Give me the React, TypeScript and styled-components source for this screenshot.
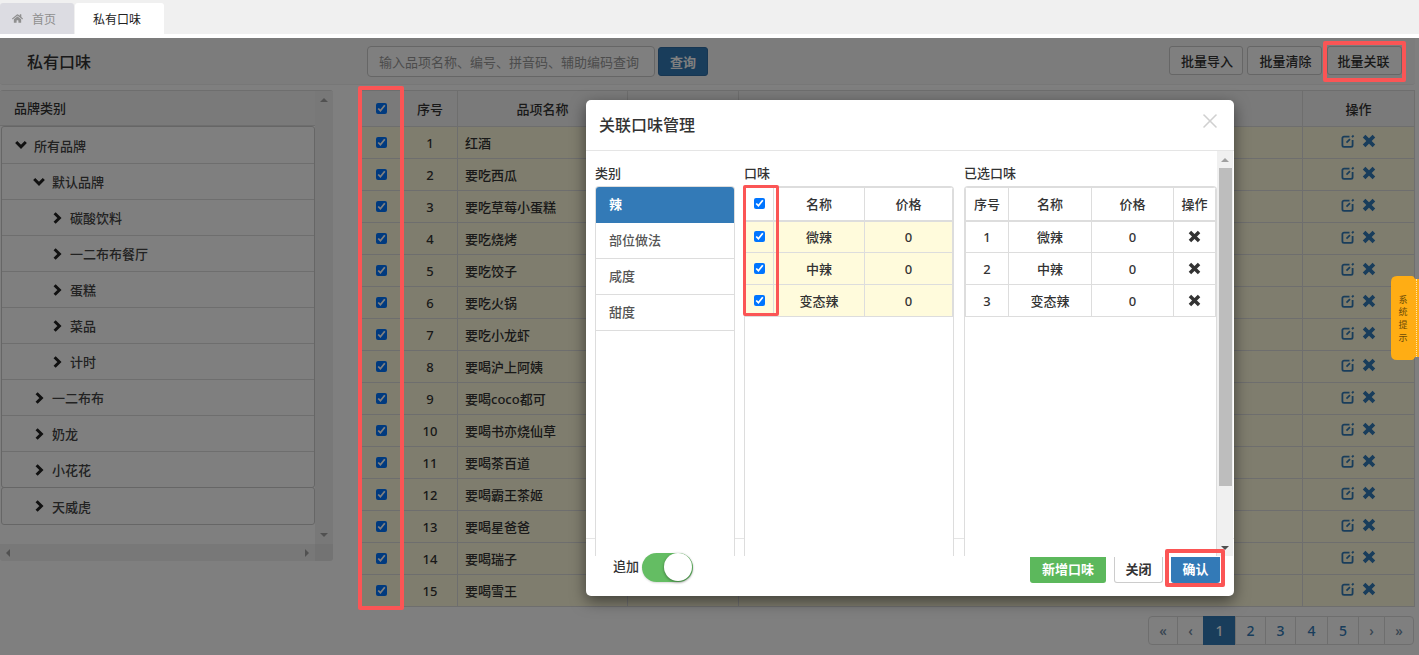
import styled, { createGlobalStyle } from "styled-components";
import { FaHome } from "react-icons/fa";
import { X } from "lucide-react";

const GlobalStyle = createGlobalStyle`
  html, body { margin: 0; padding: 0; background: #fff; }
  * { box-sizing: border-box; }
  body {
    font-family: "Noto Sans", "Noto Sans CJK SC", sans-serif;
    font-size: 13px;
    color: #333;
  }
`;

const Page = styled.div`
  position: relative;
  width: 1419px;
  height: 655px;
  overflow: hidden;
  background: #fff;
`;

const TabBar = styled.div`
  display: flex;
  gap: 1px;
  height: 34px;
  margin-bottom: 4px;
  padding-top: 3px;
  background: #f0f0f0;
  font-size: 12px;
`;

const Tab = styled.div<{ $active?: boolean }>`
  display: flex;
  align-items: center;
  gap: 9px;
  width: ${p => (p.$active ? 89 : 74)}px;
  padding-left: ${p => (p.$active ? 18 : 12)}px;
  border-radius: 3px 3px 0 0;
  background: ${p => (p.$active ? "#fff" : "#dcdce2")};
  color: ${p => (p.$active ? "#222" : "#8f8f8f")};
`;

const Header = styled.div`
  display: flex;
  align-items: flex-start;
  width: 1415px;
  height: 47px;
  padding-top: 8px;
  border-bottom: 1px solid #eee;
  background: #f9f9f9;
  border-radius: 0 0 3px 3px;
`;

const Title = styled.div`
  width: 367px;
  padding: 4px 0 0 27px;
  font-size: 16px;
  font-weight: 500;
  line-height: 24px;
`;

const SearchInput = styled.input`
  width: 288px;
  height: 31px;
  padding: 0 11px;
  border: 1px solid #ccc;
  border-radius: 4px;
  background: #fff;
  font: inherit;
  &::placeholder { color: #999; opacity: 1; }
`;

const SearchButton = styled.button`
  width: 50px;
  height: 29px;
  margin: 1px 0 0 3px;
  padding: 0;
  border: 1px solid #2e6da4;
  border-radius: 3px;
  background: #337ab7;
  color: #fff;
  font: inherit;
  font-weight: 700;
`;

const Actions = styled.div`
  display: flex;
  gap: 4px;
  margin-left: auto;
  padding-right: 13px;
`;

const ActionButton = styled.button`
  width: 75px;
  height: 29px;
  padding: 0 0 0 2px;
  border: 1px solid #ccc;
  border-radius: 3px;
  background: #fff;
  color: #333;
  font: inherit;
  font-weight: 500;
  &:first-child { width: 74px; }
  &:last-child { margin-left: 1px; padding: 0 2px 0 0; }
`;

const Main = styled.div`
  display: flex;
  align-items: flex-start;
  gap: 27px;
  padding-top: 5px;
`;

const BrandPanel = styled.div`
  display: grid;
  grid-template-columns: 315px 18px;
  grid-template-rows: 453px 18px;
  width: 333px;
  height: 471px;
  border-radius: 3px;
  background: #fff;
  border-top: 1px solid #ddd;
  overflow: hidden;
`;

const PanelHead = styled.div`
  height: 35px;
  padding-left: 14px;
  border-bottom: 1px solid #ddd;
  background: #f5f5f5;
  font-weight: 500;
  line-height: 35px;
`;

const TreeGroup = styled.div`
  margin-left: 1px;
  width: 314px;
  border: 1px solid #ccc;
  border-radius: 3px;
  background: #fff;
  & + & { margin-top: -1px; }
`;

const TreeRow = styled.div<{ $indent: number }>`
  display: flex;
  align-items: center;
  gap: 7px;
  height: 36px;
  padding-left: ${p => p.$indent}px;
  border-top: 1px solid #ddd;
  color: #444;
  font-weight: 500;
  &:first-child { border-top: none; }
`;

const ChevronSvg = styled.svg`
  flex: none;
  width: 12px;
  height: 12px;
  fill: none;
  stroke: #222;
  stroke-width: 3;
`;

const ScrollTrack = styled.div<{ $horizontal?: boolean }>`
  display: flex;
  flex-direction: ${p => (p.$horizontal ? "row" : "column")};
  align-items: center;
  justify-content: space-between;
  padding: ${p => (p.$horizontal ? "0 6px" : "7px 0")};
  background: #f0f0f0;
`;

const ScrollCorner = styled.div`
  background: #e6e6e6;
`;

const Arrow = styled.i<{ $dir: "up" | "down" | "left" | "right"; $tone?: string }>`
  display: block;
  width: 0;
  height: 0;
  border: 4px solid transparent;
  ${p => (p.$dir === "up" ? `border-top: none; border-bottom: 4px solid ${p.$tone ?? "#a3a3a3"};` : "")}
  ${p => (p.$dir === "down" ? `border-bottom: none; border-top: 4px solid ${p.$tone ?? "#a3a3a3"};` : "")}
  ${p => (p.$dir === "left" ? `border-left: none; border-right: 4px solid ${p.$tone ?? "#a3a3a3"};` : "")}
  ${p => (p.$dir === "right" ? `border-right: none; border-left: 4px solid ${p.$tone ?? "#a3a3a3"};` : "")}
`;

const TableColumn = styled.div`
  width: 1055px;
`;

const GridTable = styled.table`
  width: 100%;
  border-collapse: collapse;
  table-layout: fixed;
`;

const MainTable = styled(GridTable)`
  border: 1px solid #ddd;
`;

const HeadCell = styled.th<{ $w?: number; $h?: number; $thick?: boolean }>`
  width: ${p => (p.$w ? `${p.$w}px` : "auto")};
  height: ${p => p.$h ?? 36}px;
  padding: 0;
  border: 1px solid #ddd;
  border-bottom-width: ${p => (p.$thick ? 2 : 1)}px;
  background: ${p => (p.$thick ? "#fff" : "#f5f5f5")};
  font-weight: 500;
  text-align: center;
`;

const Row = styled.tr<{ $tinted?: boolean }>`
  height: 32px;
  background: ${p => (p.$tinted ? "#fffbdc" : "#fff")};
`;

const Cell = styled.td<{ $left?: boolean }>`
  padding: 0 0 0 ${p => (p.$left ? 7 : 0)}px;
  border: 1px solid #ddd;
  text-align: ${p => (p.$left ? "left" : "center")};
  font-weight: 500;
  white-space: nowrap;
`;

const Check = styled.input.attrs({ type: "checkbox", defaultChecked: true })`
  display: block;
  width: 11px;
  height: 11px;
  margin: 0 auto;
`;

const RowActions = styled.div`
  display: flex;
  align-items: center;
  justify-content: center;
  gap: 7px;
  padding-bottom: 3px;
  color: #337ab7;
`;

const EditSvg = styled.svg`
  display: block;
  width: 14px;
  height: 14px;
  fill: none;
  stroke: currentColor;
  stroke-width: 1.8;
`;

const CrossSvg = styled.svg<{ $size: number }>`
  display: block;
  width: ${p => p.$size}px;
  height: ${p => p.$size}px;
  fill: none;
  stroke: currentColor;
  stroke-width: 3.2;
`;

const RemoveCell = styled.span`
  display: flex;
  justify-content: center;
  color: #333;
`;

const Pager = styled.div`
  display: flex;
  justify-content: flex-end;
  margin: 9px 1px 0 0;
`;

const PageCell = styled.div<{ $w: number; $active?: boolean; $muted?: boolean }>`
  display: flex;
  align-items: center;
  justify-content: center;
  width: ${p => p.$w}px;
  height: 29px;
  margin-left: -1px;
  border: 1px solid ${p => (p.$active ? "#337ab7" : "#ddd")};
  background: ${p => (p.$active ? "#337ab7" : "#fff")};
  color: ${p => (p.$active ? "#fff" : p.$muted ? "#6f8aa3" : "#337ab7")};
  font-size: 14px;
  font-weight: 500;
  &:first-child { border-radius: 4px 0 0 4px; }
  &:last-child { border-radius: 0 4px 4px 0; }
`;

const Backdrop = styled.div`
  position: absolute;
  inset: 38px 0 0 0;
  background: rgba(0, 0, 0, 0.5);
`;

const Modal = styled.div`
  position: absolute;
  z-index: 1;
  left: 586px;
  top: 100px;
  width: 648px;
  height: 496px;
  border-radius: 5px;
  background: #fff;
  box-shadow: 0 5px 15px rgba(0, 0, 0, 0.5);
`;

const ModalHead = styled.div`
  display: flex;
  align-items: center;
  justify-content: space-between;
  height: 51px;
  padding: 0 12px 2px 13px;
  border-bottom: 1px solid #e5e5e5;
  font-size: 16px;
  font-weight: 500;
  svg { color: #d0d0d0; margin-bottom: 6px; }
`;

const ModalBody = styled.div`
  position: relative;
  z-index: 1;
  display: flex;
  height: 405px;
  margin-bottom: -18px;
  padding-left: 9px;
`;

const Column = styled.div<{ $w: number; $gap?: number }>`
  display: flex;
  flex-direction: column;
  width: ${p => p.$w}px;
  margin-right: ${p => p.$gap ?? 0}px;
  background: #fff;
`;

const ColumnLabel = styled.div`
  height: 35px;
  padding-top: 11px;
  font-weight: 500;
  line-height: 22px;
`;

const ColumnBox = styled.div`
  flex: 1;
  border: 1px solid #ddd;
  border-bottom: none;
  border-radius: 4px 4px 0 0;
  overflow: hidden;
`;

const CategoryItem = styled.div<{ $active?: boolean }>`
  height: 36px;
  padding-left: 13px;
  border-bottom: 1px solid ${p => (p.$active ? "#337ab7" : "#ddd")};
  background: ${p => (p.$active ? "#337ab7" : "#fff")};
  color: ${p => (p.$active ? "#fff" : "#555")};
  font-weight: ${p => (p.$active ? 700 : 500)};
  line-height: 35px;
`;

const ModalScroll = styled.div`
  display: flex;
  flex-direction: column;
  align-items: center;
  width: 16px;
  height: 405px;
  background: #f0f0f0;
`;

const ThumbCap = styled.div<{ $h: number }>`
  display: flex;
  align-items: center;
  justify-content: center;
  height: ${p => p.$h}px;
`;

const Thumb = styled.div`
  flex: none;
  width: 13px;
  height: 318px;
  background: #bdbdbd;
`;

const ThumbGap = styled.div`
  flex: 1;
`;

const ModalFoot = styled.div`
  display: flex;
  align-items: flex-start;
  height: 58px;
  padding: 14px 14px 0 27px;
  border-top: 1px solid #e5e5e5;
`;

const ToggleLabel = styled.span`
  position: relative;
  z-index: 2;
  margin-right: 3px;
  line-height: 26px;
  font-weight: 500;
`;

const Toggle = styled.div`
  position: relative;
  z-index: 2;
  display: flex;
  justify-content: flex-end;
  width: 51px;
  height: 29px;
  border-radius: 15px;
  background: #64bd63;
  box-shadow: 0 1px 2px rgba(0, 0, 0, 0.15);
`;

const Knob = styled.div`
  width: 28px;
  height: 28px;
  margin: 0 1px 0 0;
  border-radius: 50%;
  background: #fff;
  box-shadow: 0 1px 3px rgba(0, 0, 0, 0.4);
`;

const FootButtons = styled.div`
  position: relative;
  z-index: 2;
  display: flex;
  gap: 8px;
  margin: 4px 0 0 auto;
`;

const FootButton = styled.button<{ $kind: "success" | "default" | "primary"; $w: number }>`
  width: ${p => p.$w}px;
  height: 26px;
  padding: 0 0 2px;
  border: 1px solid ${p => ({ success: "#5cb85c", default: "#ccc", primary: "#337ab7" })[p.$kind]};
  border-top: none;
  border-radius: 0 0 3px 3px;
  background: ${p => ({ success: "#5cb85c", default: "#fff", primary: "#337ab7" })[p.$kind]};
  color: ${p => (p.$kind === "default" ? "#333" : "#fff")};
  font: inherit;
  font-weight: 700;
`;

const Mark = styled.div<{ $x: number; $y: number; $w: number; $h: number; $b?: number }>`
  position: absolute;
  z-index: 2;
  left: ${p => p.$x}px;
  top: ${p => p.$y}px;
  width: ${p => p.$w}px;
  height: ${p => p.$h}px;
  border: ${p => p.$b ?? 4}px solid #fb5555;
  border-radius: 2px;
`;

const NoticeTab = styled.div`
  position: absolute;
  z-index: 2;
  left: 1391px;
  top: 276px;
  display: flex;
  flex-direction: column;
  align-items: center;
  justify-content: center;
  width: 28px;
  height: 84px;
  padding: 2px 4px 0 0;
  background: #ffad14;
  color: #6b4a08;
  font-size: 9px;
  line-height: 12.6px;
  clip-path: path("M6 0H21Q23 0 24 3H28V81H24Q23 84 21 84H6Q0 84 0 78V6Q0 0 6 0Z");
  &::after {
    content: "";
    position: absolute;
    top: 3px;
    bottom: 3px;
    right: 2px;
    border-right: 1px dotted #ffe6b0;
  }
`;

const ChevronDown = () => (
  <ChevronSvg viewBox="0 0 12 12"><polyline points="1.2,3 6,7.8 10.8,3" /></ChevronSvg>
);

const ChevronRight = () => (
  <ChevronSvg viewBox="0 0 12 12"><polyline points="3.6,1.2 8.4,6 3.6,10.8" /></ChevronSvg>
);

const EditIcon = () => (
  <EditSvg viewBox="0 0 14 14">
    <path d="M8.5 2.6H3a1.6 1.6 0 0 0-1.6 1.6v7a1.6 1.6 0 0 0 1.6 1.6h7a1.6 1.6 0 0 0 1.6-1.6V6" />
    <path d="M5.5 8.6L9 5.1" />
    <path d="M11 3.1L12.6 1.5" />
  </EditSvg>
);

const CrossIcon = ({ size }: { size: number }) => (
  <CrossSvg $size={size} viewBox="0 0 12 12">
    <path d="M1.8 1.8L10.2 10.2M10.2 1.8L1.8 10.2" />
  </CrossSvg>
);

const tree = [
  { label: "所有品牌", indent: 13, open: true },
  { label: "默认品牌", indent: 31, open: true },
  { label: "碳酸饮料", indent: 49 },
  { label: "一二布布餐厅", indent: 49 },
  { label: "蛋糕", indent: 49 },
  { label: "菜品", indent: 49 },
  { label: "计时", indent: 49 },
  { label: "一二布布", indent: 31 },
  { label: "奶龙", indent: 31 },
  { label: "小花花", indent: 31 },
];

const items = [
  "红酒", "要吃西瓜", "要吃草莓小蛋糕", "要吃烧烤", "要吃饺子", "要吃火锅", "要吃小龙虾", "要喝沪上阿姨",
  "要喝coco都可", "要喝书亦烧仙草", "要喝茶百道", "要喝霸王茶姬", "要喝星爸爸", "要喝瑞子", "要喝雪王",
];

const pages: [string, number, boolean?, boolean?][] = [
  ["«", 30, false, true], ["‹", 27, false, true], ["1", 33, true], ["2", 31], ["3", 31], ["4", 33], ["5", 32],
  ["›", 27, false, true], ["»", 30, false, true],
];

const flavors = ["微辣", "中辣", "变态辣"];

export default function App() {
  return (
    <Page>
      <GlobalStyle />
      <TabBar>
        <Tab><FaHome size={11} />首页</Tab>
        <Tab $active>私有口味</Tab>
      </TabBar>

      <Header>
        <Title>私有口味</Title>
        <SearchInput placeholder="输入品项名称、编号、拼音码、辅助编码查询" />
        <SearchButton>查询</SearchButton>
        <Actions>
          <ActionButton>批量导入</ActionButton>
          <ActionButton>批量清除</ActionButton>
          <ActionButton>批量关联</ActionButton>
        </Actions>
      </Header>

      <Main>
        <BrandPanel>
          <div>
            <PanelHead>品牌类别</PanelHead>
            <TreeGroup>
              {tree.map(n => (
                <TreeRow key={n.label} $indent={n.indent}>
                  {n.open ? <ChevronDown /> : <ChevronRight />}
                  {n.label}
                </TreeRow>
              ))}
            </TreeGroup>
            <TreeGroup>
              <TreeRow $indent={31}><ChevronRight />天威虎</TreeRow>
            </TreeGroup>
          </div>
          <ScrollTrack>
            <Arrow $dir="up" />
            <Arrow $dir="down" />
          </ScrollTrack>
          <ScrollTrack $horizontal>
            <Arrow $dir="left" />
            <Arrow $dir="right" />
          </ScrollTrack>
          <ScrollCorner />
        </BrandPanel>

        <TableColumn>
          <MainTable>
            <thead>
              <tr>
                <HeadCell $w={42}><Check /></HeadCell>
                <HeadCell $w={55}>序号</HeadCell>
                <HeadCell $w={170}>品项名称</HeadCell>
                <HeadCell $w={111} />
                <HeadCell />
                <HeadCell $w={112}>操作</HeadCell>
              </tr>
            </thead>
            <tbody>
              {items.map((name, i) => (
                <Row key={name} $tinted>
                  <Cell><Check /></Cell>
                  <Cell>{i + 1}</Cell>
                  <Cell $left>{name}</Cell>
                  <Cell />
                  <Cell />
                  <Cell>
                    <RowActions>
                      <EditIcon />
                      <CrossIcon size={14} />
                    </RowActions>
                  </Cell>
                </Row>
              ))}
            </tbody>
          </MainTable>
          <Pager>
            {pages.map(([t, w, active, muted]) => (
              <PageCell key={t} $w={w} $active={active} $muted={muted}>{t}</PageCell>
            ))}
          </Pager>
        </TableColumn>
      </Main>

      <Backdrop />

      <Modal>
        <ModalHead>
          关联口味管理
          <X size={24} strokeWidth={1.6} />
        </ModalHead>
        <ModalBody>
          <Column $w={140} $gap={9}>
            <ColumnLabel>类别</ColumnLabel>
            <ColumnBox>
              <CategoryItem $active>辣</CategoryItem>
              <CategoryItem>部位做法</CategoryItem>
              <CategoryItem>咸度</CategoryItem>
              <CategoryItem>甜度</CategoryItem>
            </ColumnBox>
          </Column>
          <Column $w={210} $gap={10}>
            <ColumnLabel>口味</ColumnLabel>
            <ColumnBox>
              <GridTable>
                <thead>
                  <tr>
                    <HeadCell $w={28} $h={33} $thick><Check /></HeadCell>
                    <HeadCell $w={91} $h={33} $thick>名称</HeadCell>
                    <HeadCell $h={33} $thick>价格</HeadCell>
                  </tr>
                </thead>
                <tbody>
                  {flavors.map(f => (
                    <Row key={f} $tinted>
                      <Cell><Check /></Cell>
                      <Cell>{f}</Cell>
                      <Cell>0</Cell>
                    </Row>
                  ))}
                </tbody>
              </GridTable>
            </ColumnBox>
          </Column>
          <Column $w={253}>
            <ColumnLabel>已选口味</ColumnLabel>
            <ColumnBox>
              <GridTable>
                <thead>
                  <tr>
                    <HeadCell $w={43} $h={33} $thick>序号</HeadCell>
                    <HeadCell $w={83} $h={33} $thick>名称</HeadCell>
                    <HeadCell $w={82} $h={33} $thick>价格</HeadCell>
                    <HeadCell $h={33} $thick>操作</HeadCell>
                  </tr>
                </thead>
                <tbody>
                  {flavors.map((f, i) => (
                    <Row key={f}>
                      <Cell>{i + 1}</Cell>
                      <Cell>{f}</Cell>
                      <Cell>0</Cell>
                      <Cell><RemoveCell><CrossIcon size={13} /></RemoveCell></Cell>
                    </Row>
                  ))}
                </tbody>
              </GridTable>
            </ColumnBox>
          </Column>
          <ModalScroll>
            <ThumbCap $h={17}><Arrow $dir="up" $tone="#a0a0a0" /></ThumbCap>
            <Thumb />
            <ThumbGap />
            <ThumbCap $h={17}><Arrow $dir="down" $tone="#505050" /></ThumbCap>
          </ModalScroll>
        </ModalBody>
        <ModalFoot>
          <ToggleLabel>追加</ToggleLabel>
          <Toggle><Knob /></Toggle>
          <FootButtons>
            <FootButton $kind="success" $w={76}>新增口味</FootButton>
            <FootButton $kind="default" $w={49}>关闭</FootButton>
            <FootButton $kind="primary" $w={49}>确认</FootButton>
          </FootButtons>
        </ModalFoot>
      </Modal>

      <Mark $x={358} $y={86} $w={46} $h={524} />
      <Mark $x={1323} $y={41} $w={83} $h={41} />
      <Mark $x={743} $y={185} $w={36} $h={131} $b={3} />
      <Mark $x={1165} $y={549} $w={60} $h={38} />

      <NoticeTab>
        <span>系</span>
        <span>统</span>
        <span>提</span>
        <span>示</span>
      </NoticeTab>
    </Page>
  );
}
